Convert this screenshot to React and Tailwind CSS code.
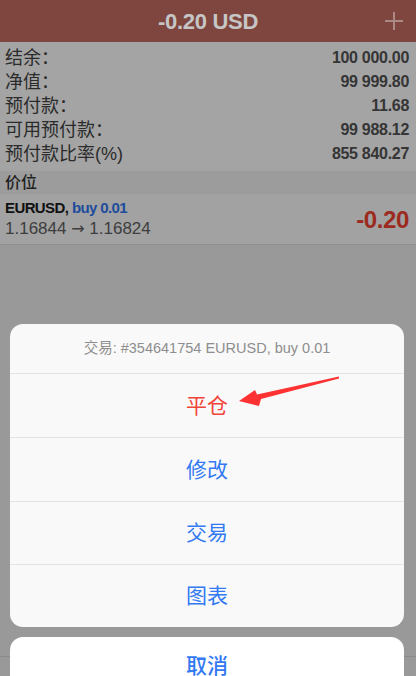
import React from 'react';

const font = { fontFamily: '"Liberation Sans", "Noto Sans CJK SC", sans-serif' };

const account = [
  ['结余：', '100 000.00'],
  ['净值：', '99 999.80'],
  ['预付款：', '11.68'],
  ['可用预付款：', '99 988.12'],
  ['预付款比率(%)', '855 840.27'],
];

const actions = [
  { label: '平仓', danger: true },
  { label: '修改' },
  { label: '交易' },
  { label: '图表' },
];

function PlusIcon() {
  return (
    <svg width="20" height="20" viewBox="0 0 20 20">
      <path d="M10 1v18M1 10h18" stroke="#ab8985" strokeWidth="2" fill="none" />
    </svg>
  );
}

function Arrow() {
  return (
    <svg className="absolute left-0 top-0 pointer-events-none" width="416" height="676" viewBox="0 0 416 676">
      <polygon
        points="239,401 255,390 257,394.5 339,376.5 339,378.5 261,399 259,406"
        fill="#fe3232"
      />
    </svg>
  );
}

export default function App() {
  return (
    <div className="relative w-[416px] h-[676px] overflow-hidden bg-[#999999] flex flex-col" style={font}>
      {/* header */}
      <div className="h-[42px] bg-[#7f463f] grid grid-cols-[60px_1fr_60px] items-center shrink-0">
        <div />
        <div className="text-center text-[22px] font-bold text-[#c6c6c6] tracking-[-0.3px]">-0.20 USD</div>
        <div className="flex justify-end pr-[12px]">
          <PlusIcon />
        </div>
      </div>

      {/* account */}
      <div className="bg-[#a4a4a4] pt-[4px] pb-[5px] px-[5px]">
        {account.map(([label, value]) => (
          <div key={label} className="h-[24px] flex items-center justify-between">
            <span className="text-[18px] text-[#2b2b2b]">{label}</span>
            <span className="text-[16px] font-bold text-[#353535] tracking-[-0.3px] pr-[2px]">{value}</span>
          </div>
        ))}
      </div>

      {/* positions */}
      <div className="h-[23px] bg-[#9c9c9c] px-[5px] flex items-center">
        <span className="text-[16px] font-medium text-[#1f1f1f]">价位</span>
      </div>
      <div className="h-[51px] bg-[#a2a2a2] border-b border-[#8f8f8f] px-[5px] flex items-center justify-between">
        <div className="flex flex-col">
          <div className="text-[15px] font-bold leading-[20px] tracking-[-0.6px]">
            <span className="text-[#111111]">EURUSD, </span>
            <span className="text-[#1d4c9c]">buy 0.01</span>
          </div>
          <div className="text-[17px] leading-[22px] text-[#3d3d3d]">
            1.16844 <span className="font-['DejaVu_Sans'] text-[16px]">→</span> 1.16824
          </div>
        </div>
        <span className="text-[24px] font-bold text-[#9c2a1e] tracking-[-0.4px] pr-[2px] pt-[2px]">-0.20</span>
      </div>

      <div className="flex-1" />
      <div className="h-[20px] border-t border-[#8a8a8a]" />

      {/* action sheet */}
      <div className="absolute left-[10px] top-[324px] w-[394px] flex flex-col gap-[10px]">
        <div className="rounded-[13px] bg-[#f9f9f9] overflow-hidden">
          <div className="h-[49px] flex items-center justify-center text-[14.5px] text-[#8e8e8e]">
            交易: #354641754 EURUSD, buy 0.01
          </div>
          {actions.map((a, i) => (
            <div
              key={a.label}
              className={
                'flex items-center justify-center border-t border-[#e4e4e4] text-[21px] ' +
                (i < 2 ? 'h-[64px] ' : 'h-[63px] ') +
                (a.danger ? 'text-[#f2453a]' : 'text-[#3279f3]')
              }
            >
              {a.label}
            </div>
          ))}
        </div>
        <div className="h-[58px] rounded-[13px] bg-white flex items-center justify-center text-[21px] font-medium text-[#3279f3]">
          取消
        </div>
      </div>

      <Arrow />
    </div>
  );
}
